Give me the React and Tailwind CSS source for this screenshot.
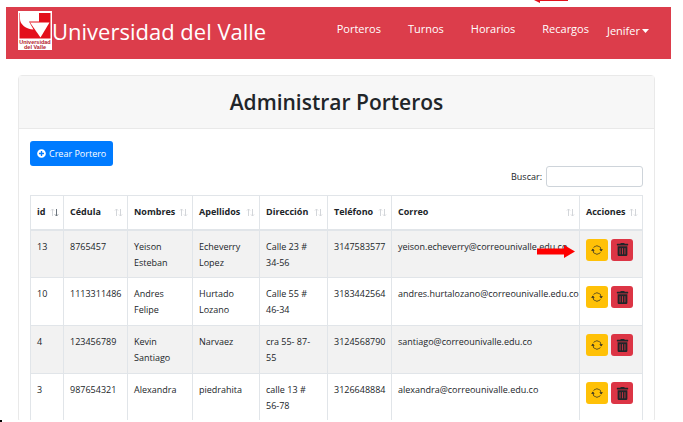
import React from "react";
import { BsArrowRepeat } from "react-icons/bs";
import { FaPlusCircle, FaTrashAlt } from "react-icons/fa";

const columns = [
  { label: "id", width: "w-[33px]", sorted: true },
  { label: "Cédula", width: "w-16" },
  { label: "Nombres", width: "w-[65px]" },
  { label: "Apellidos", width: "w-[67px]" },
  { label: "Dirección", width: "w-[68px]" },
  { label: "Teléfono", width: "w-16" },
  { label: "Correo", width: "" },
  { label: "Acciones", width: "w-[63px]" },
];

const rows = [
  ["13", "8765457", "Yeison Esteban", "Echeverry Lopez", "Calle 23 # 34-56", "3147583577", "yeison.echeverry@correounivalle.edu.co"],
  ["10", "1113311486", "Andres Felipe", "Hurtado Lozano", "Calle 55 # 46-34", "3183442564", "andres.hurtalozano@correounivalle.edu.co"],
  ["4", "123456789", "Kevin Santiago", "Narvaez", "cra 55- 87-55", "3124568790", "santiago@correounivalle.edu.co"],
  ["3", "987654321", "Alexandra", "piedrahita", "calle 13 # 56-78", "3126648884", "alexandra@correounivalle.edu.co"],
];

const cellPadding = ["", "", "pr-2", "pr-2", "pr-3", "", ""];

function Logo() {
  return (
    <svg viewBox="0 0 34 39" className="h-[39px] w-[34px] shrink-0" role="img" aria-label="Universidad del Valle">
      <rect width="34" height="39" fill="#fff" />
      <rect x="1.5" y="2" width="31" height="25.500" fill="#e30f1b" />
      <path d="M2 2H21V10.500H11L15.500 18.500C8 18 2 13.500 2 8Z" fill="#fff" />
      <path d="M12 11.500H31.500L22.500 26.500Z" fill="#fff" />
      <text x="17" y="32.500" textAnchor="middle" fontSize="5.500" fontWeight="700" fill="#b3202c" fontFamily="Liberation Sans, sans-serif">Universidad</text>
      <text x="17" y="37.500" textAnchor="middle" fontSize="5.500" fontWeight="700" fill="#b3202c" fontFamily="Liberation Sans, sans-serif">del Valle</text>
    </svg>
  );
}

function SortIcon({ sorted }) {
  return (
    <svg viewBox="0 0 9 9" className="h-[9px] w-[9px] shrink-0" fill="none" stroke="#d3d6da" aria-hidden="true">
      <path d="M2.500 8V1M1 2.500L2.500 1L4 2.500" />
      <path d="M6.500 1V8M5 6.500L6.500 8L8 6.500" stroke={sorted ? "#6c757d" : "#d3d6da"} />
    </svg>
  );
}

export default function App() {
  return (
    <div className="relative h-screen overflow-hidden bg-white pb-0.5 font-['Open_Sans','Noto_Sans',sans-serif] text-[#212529]">
      <div className="h-full overflow-hidden pt-[7px]">
        <header className="mr-3 ml-1.5 flex h-[52px] items-start bg-[#dc3d4b] pr-[22px] pl-3 text-white">
          <a href="#inicio" className="flex items-center pt-1">
            <Logo />
            <span className="text-[22px] leading-8 whitespace-nowrap">Universidad del Valle</span>
          </a>
          <nav className="ml-auto flex gap-[27px] pt-3 text-[11px] leading-5">
            <a href="#porteros">Porteros</a>
            <a href="#turnos">Turnos</a>
            <a href="#horarios">Horarios</a>
            <a href="#recargos">Recargos</a>
          </nav>
          <button type="button" className="ml-[18px] flex items-center gap-0.5 pt-3.5 text-[11px] leading-5">
            Jenifer
            <svg viewBox="0 0 7 4" className="h-1 w-[7px]" fill="currentColor" aria-hidden="true">
              <path d="M0 0H7L3.500 4Z" />
            </svg>
          </button>
        </header>

        <main className="mt-4 mr-7 ml-[18px] rounded-sm border border-[#e9e9e9]">
          <h1 className="border-b border-[#e9e9e9] bg-[#f7f7f7] py-2.5 text-center text-[21px] leading-8 font-semibold">
            Administrar Porteros
          </h1>
          <div className="px-[11px] pt-3">
            <button type="button" className="flex h-[25px] items-center gap-[3px] rounded-[3px] bg-[#007bff] px-[7px] text-[9px] whitespace-nowrap text-white">
              <FaPlusCircle className="h-[9px] w-[9px]" />
              Crear Portero
            </button>
            <div className="flex items-center justify-end gap-1 text-[9px]">
              <label htmlFor="buscar">Buscar:</label>
              <input id="buscar" type="search" className="h-[21px] w-[97px] rounded-[3px] border border-[#ced4da] bg-white px-1 outline-none" />
            </div>
            <table className="mt-2 w-full table-fixed border-collapse text-left text-[9px] leading-4">
              <thead>
                <tr>
                  {columns.map((c) => (
                    <th key={c.label} className={`${c.width} h-[34px] border border-b-2 border-[#e1e5e9] pr-1 pl-1.5 font-bold`}>
                      <span className="flex items-center justify-between whitespace-nowrap">
                        {c.label}
                        <SortIcon sorted={c.sorted} />
                      </span>
                    </th>
                  ))}
                </tr>
              </thead>
              <tbody>
                {rows.map((row, i) => (
                  <tr key={row[0]} className="odd:bg-[#f2f2f2]">
                    {row.map((cell, j) => (
                      <td key={j} className={`${cellPadding[j]} h-12 border border-[#e1e5e9] pt-2 pl-1.5 align-top`}>
                        {j === 6 && i === 0 ? (
                          <span className="relative block">
                            {cell}
                            <svg viewBox="0 0 38 13" className="absolute top-1.5 right-1 h-[13px] w-[38px]" fill="#fe0000" aria-hidden="true">
                              <path d="M0 3.500H27V0L38 6.500L27 13V9.500H0Z" />
                            </svg>
                          </span>
                        ) : (
                          cell
                        )}
                      </td>
                    ))}
                    <td className="h-12 border border-[#e1e5e9] pt-2 pl-1.5 align-top">
                      <div className="flex gap-[3px]">
                        <button type="button" aria-label="Actualizar" className="flex h-[22px] w-[22px] items-center justify-center rounded-[3px] bg-[#ffc107]">
                          <BsArrowRepeat className="h-3 w-3" />
                        </button>
                        <button type="button" aria-label="Eliminar" className="flex h-[22px] w-[22px] items-center justify-center rounded-[3px] bg-[#dc3545]">
                          <FaTrashAlt className="h-[13px] w-[13px]" />
                        </button>
                      </div>
                    </td>
                  </tr>
                ))}
              </tbody>
            </table>
          </div>
        </main>
      </div>
      <svg viewBox="0 0 34 3" className="absolute top-0 right-[115px] h-[3px] w-[34px]" fill="#e3101c" aria-hidden="true">
        <path d="M0 0H34V1H6V3Z" />
      </svg>
      <span className="absolute bottom-0 left-0 h-0.5 w-0.5 bg-black" />
    </div>
  );
}
